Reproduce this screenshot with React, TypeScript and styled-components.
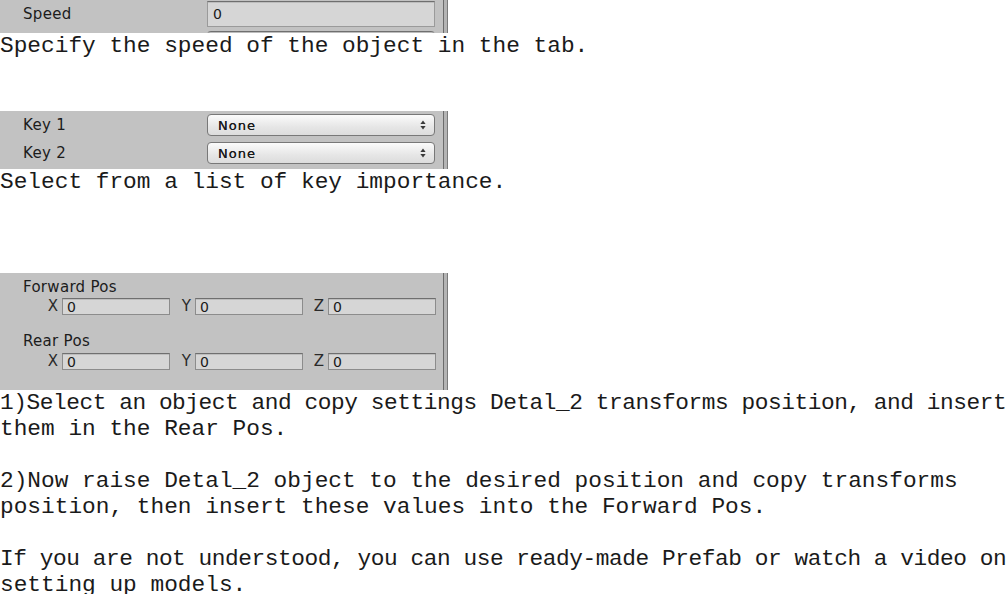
import React from 'react';
import styled, { createGlobalStyle } from 'styled-components';

const GlobalStyle = createGlobalStyle`
  html, body {
    margin: 0;
    padding: 0;
    background: #ffffff;
  }
`;

const Page = styled.div`
  width: 1007px;
  font-family: "Liberation Mono", "Courier New", monospace;
  font-size: 22.8px;
  line-height: 26px;
  color: #1a1a1a;
`;

const Line = styled.div<{ $tight?: boolean }>`
  height: 26px;
  white-space: pre;
  letter-spacing: ${(p) => (p.$tight ? '-0.44px' : '0')};
`;

const Blank = styled.div<{ $lines: number }>`
  height: ${(p) => p.$lines * 26}px;
`;

const Inspector = styled.div<{ $height: number; $padTop?: number }>`
  width: 448px;
  height: ${(p) => p.$height}px;
  box-sizing: border-box;
  padding-top: ${(p) => p.$padTop ?? 0}px;
  background: #c2c2c2;
  overflow: hidden;
  box-shadow: inset -1px 0 0 #7a7a7a, inset -4px 0 0 #b4b4b4, inset -5px 0 0 #6c6c6c;
  font-family: "DejaVu Sans", "Liberation Sans", sans-serif;
  color: #1c1c1c;
  line-height: 1;
`;

const PropRow = styled.div<{ $gap?: number; $height: number }>`
  display: grid;
  grid-template-columns: 207px 228px;
  align-items: center;
  height: ${(p) => p.$height}px;
  margin-top: ${(p) => p.$gap ?? 0}px;
`;

const Label = styled.div`
  padding-left: 23px;
  font-size: 15px;
  letter-spacing: 0.3px;
`;

const TextField = styled.div<{ $height: number }>`
  height: ${(p) => p.$height}px;
  box-sizing: border-box;
  display: flex;
  align-items: center;
  padding-left: 5px;
  background: #d6d6d6;
  border: 1px solid #9a9a9a;
  border-top-color: #6f6f6f;
  box-shadow: inset 0 1px 0 #bdbdbd;
  font-size: 14px;
  color: #1a1a1a;
`;

const PartialField = styled(TextField)`
  border-radius: 4px 4px 0 0;
`;

const Popup = styled.div`
  height: 22px;
  box-sizing: border-box;
  display: flex;
  align-items: center;
  justify-content: space-between;
  padding: 0 8px 0 10px;
  border: 1px solid #787878;
  border-radius: 4px;
  background: linear-gradient(#fbfbfb, #e6e6e6 60%, #dcdcdc);
  font-size: 13px;
  letter-spacing: 1px;
  color: #1a1a1a;
  text-shadow: 0 0 0.5px #222;
`;

const VectorRow = styled.div<{ $gap: number }>`
  display: grid;
  grid-template-columns: 17px 108px 25px 108px 25px 108px;
  margin-top: ${(p) => p.$gap}px;
  padding-left: 45px;
`;

const Axis = styled.div`
  height: 17px;
  display: flex;
  align-items: center;
  justify-content: flex-end;
  padding-right: 4px;
  font-size: 15px;
  color: #2a2a2a;
`;

const VecField = styled(TextField)`
  padding-left: 4px;
  border-color: #8c8c8c;
  border-top-color: #6f6f6f;
`;

const Heading = styled.div<{ $gap: number }>`
  padding-left: 23px;
  margin-top: ${(p) => p.$gap}px;
  height: 18px;
  display: flex;
  align-items: center;
  font-size: 15px;
  letter-spacing: 0.3px;
`;

const Arrows: React.FC = () => (
  <svg width="6" height="10" viewBox="0 0 6 10">
    <path d="M3 0.5 L5.6 4 L0.4 4 Z" fill="#3a3a3a" />
    <path d="M3 9.5 L5.6 6 L0.4 6 Z" fill="#3a3a3a" />
  </svg>
);

const Vector: React.FC<{ gap: number }> = ({ gap }) => (
  <VectorRow $gap={gap}>
    <Axis>X</Axis>
    <VecField $height={17}>0</VecField>
    <Axis>Y</Axis>
    <VecField $height={17}>0</VecField>
    <Axis>Z</Axis>
    <VecField $height={17}>0</VecField>
  </VectorRow>
);

const App: React.FC = () => {
  return (
    <>
      <GlobalStyle />
      <Page>
        <Inspector $height={33} $padTop={1}>
          <PropRow $height={26}>
            <Label>Speed</Label>
            <TextField $height={26}>0</TextField>
          </PropRow>
          <PropRow $height={10} $gap={4}>
            <span />
            <PartialField $height={10} />
          </PropRow>
        </Inspector>
        <Line>Specify the speed of the object in the tab.</Line>
        <Blank $lines={2} />

        <Inspector $height={58} $padTop={3}>
          <PropRow $height={22}>
            <Label>Key 1</Label>
            <Popup>
              None
              <Arrows />
            </Popup>
          </PropRow>
          <PropRow $height={22} $gap={6}>
            <Label>Key 2</Label>
            <Popup>
              None
              <Arrows />
            </Popup>
          </PropRow>
        </Inspector>
        <Line>Select from a list of key importance.</Line>
        <Blank $lines={3} />

        <Inspector $height={117} $padTop={5}>
          <Heading $gap={0}>Forward Pos</Heading>
          <Vector gap={2} />
          <Heading $gap={17}>Rear Pos</Heading>
          <Vector gap={3} />
        </Inspector>
        <Line $tight>1)Select an object and copy settings Detal_2 transforms position, and insert</Line>
        <Line>them in the Rear Pos.</Line>
        <Blank $lines={1} />
        <Line>2)Now raise Detal_2 object to the desired position and copy transforms</Line>
        <Line>position, then insert these values into the Forward Pos.</Line>
        <Blank $lines={1} />
        <Line $tight>If you are not understood, you can use ready-made Prefab or watch a video on</Line>
        <Line>setting up models.</Line>
      </Page>
    </>
  );
};

export default App;
